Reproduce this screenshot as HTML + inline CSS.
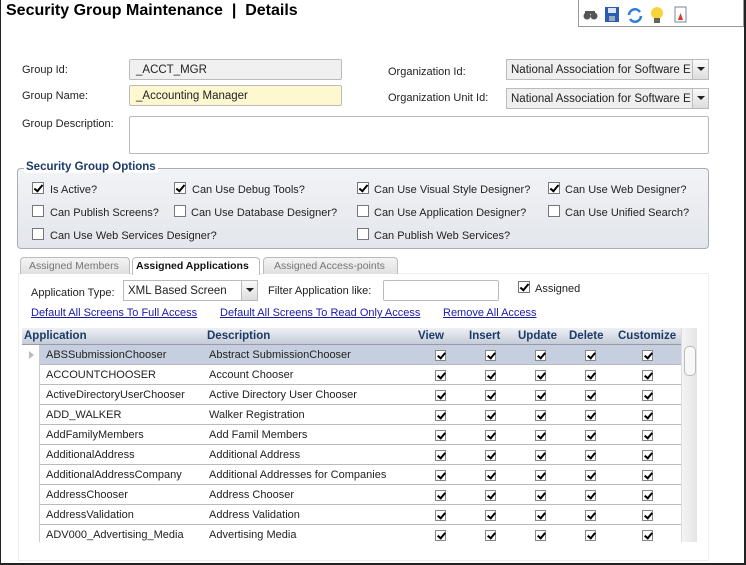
<!DOCTYPE html>
<html><head><meta charset="utf-8"><style>
*{box-sizing:border-box;margin:0;padding:0}
body{width:746px;height:565px;overflow:hidden;background:#fff;font-family:"Liberation Sans",Arial,sans-serif;font-size:11px;color:#222;position:relative}
.a{position:absolute;white-space:nowrap}
.frame{position:absolute;left:0;top:0;width:746px;height:565px;border-left:1px solid #222;border-right:2px solid #222;border-bottom:2px solid #222}
.title{left:6px;top:2px;font-size:16px;font-weight:bold;color:#000}
.tb{left:578px;top:-1px;width:166px;height:28px;border:1px solid #999;background:#fff}
.inp{position:absolute;border:1px solid #bbb;border-radius:2px;background:#f0f0f0;padding:4px 6px 0;font-size:11.5px;color:#222;white-space:nowrap}
.sel{position:absolute;border:1px solid #bbb;background:#efefef;padding:4px 4px 0;font-size:11.5px;overflow:hidden;white-space:nowrap}
.sel .dd{position:absolute;right:0;top:0;width:16px;height:100%;background:linear-gradient(#fafafa,#ddd);border-left:1px solid #bbb}
.sel .dd:after{content:"";position:absolute;left:4px;top:7px;border:4px solid transparent;border-top:4px solid #222}
.fs{left:17px;top:168px;width:692px;height:81px;border:1px solid #aab;border-radius:4px;background:linear-gradient(#f2f3f6,#e3e6ec)}
.leg{left:24px;top:161px;font-weight:bold;color:#1d3a68;background:#fff;padding:0 2px;font-size:11.5px}
.cb{position:absolute;width:12px;height:12px;border:1px solid #777;background:#fff}
.cb.c:after{content:"";position:absolute;left:3px;top:0px;width:3px;height:7px;border:solid #000;border-width:0 2px 2px 0;transform:rotate(40deg)}
.tab{position:absolute;top:257px;height:17px;border:1px solid #bbb;border-bottom:none;border-radius:4px 4px 0 0;background:linear-gradient(#f4f4f4,#e0e0e0);color:#777;padding:2px 0 0 6px;font-size:10.5px;white-space:nowrap;overflow:hidden}
.panel{left:18px;top:273px;width:691px;height:288px;border:1px solid #eee;background:#fff}
.lnk{color:#1a1aaa;text-decoration:underline}
.gh{left:22px;top:328px;width:659px;height:17px;background:linear-gradient(#eef0f4,#c4ccd8);border-bottom:1px solid #99a}
.gh span{position:absolute;top:2px;font-weight:bold;color:#1d3a68;font-size:11.5px}
.row{position:absolute;left:40px;width:641px;height:20px;border-bottom:1px solid #bbb}
.row span{position:absolute;top:4px}
.g{position:absolute;width:11px;height:11px;border:1px solid #888;background:#fff}
.g:after{content:"";position:absolute;left:3px;top:0;width:3px;height:6px;border:solid #000;border-width:0 2px 2px 0;transform:rotate(40deg)}
</style></head><body>
<div class="frame"></div>
<div class="a title">Security Group Maintenance&nbsp; |&nbsp; Details</div>
<div class="a tb"></div>
<svg class="a" style="left:582px;top:6px" width="110" height="18">
<g fill="#555"><circle cx="5" cy="10" r="3.5"/><circle cx="12" cy="10" r="3.5"/><rect x="3" y="5" width="10" height="3"/></g>
<g transform="translate(23,1)"><rect width="14" height="15" fill="#2a5db0"/><rect x="3" y="1" width="8" height="5" fill="#dde6f5"/><rect x="4" y="9" width="6" height="5" fill="#9ab"/></g>
<g transform="translate(45,1)" fill="none" stroke="#2d7fd8" stroke-width="2.5"><path d="M2 8 A6 6 0 0 1 13 5"/><path d="M14 9 A6 6 0 0 1 3 12"/></g>
<g transform="translate(68,0)"><circle cx="7" cy="7" r="6" fill="#f7d53a"/><rect x="4" y="12" width="6" height="5" fill="#665"/></g>
<g transform="translate(93,1)"><rect width="11" height="15" fill="#fff" stroke="#789"/><path d="M3 13 L5.5 6 L8 13 Z" fill="#d32"/></g>
</svg>

<div class="a" style="left:22px;top:64px">Group Id:</div>
<div class="inp" style="left:129px;top:59px;width:213px;height:21px">_ACCT_MGR</div>
<div class="a" style="left:22px;top:90px">Group Name:</div>
<div class="inp" style="left:129px;top:85px;width:213px;height:21px;background:#fdf8cf">_Accounting Manager</div>
<div class="a" style="left:22px;top:118px">Group Description:</div>
<div class="inp" style="left:129px;top:116px;width:580px;height:38px;background:#fff"></div>
<div class="a" style="left:388px;top:66px">Organization Id:</div>
<div class="sel" style="left:506px;top:59px;width:203px;height:21px">National Association for Software E<div class="dd"></div></div>
<div class="a" style="left:388px;top:92px">Organization Unit Id:</div>
<div class="sel" style="left:506px;top:88px;width:203px;height:21px">National Association for Software E<div class="dd"></div></div>

<div class="a fs"></div>
<div class="a leg">Security Group Options</div>
<div class="cb c" style="left:32px;top:182px"></div><div class="a" style="left:50px;top:184px">Is Active?</div>
<div class="cb c" style="left:174px;top:182px"></div><div class="a" style="left:192px;top:184px">Can Use Debug Tools?</div>
<div class="cb c" style="left:357px;top:182px"></div><div class="a" style="left:374px;top:184px">Can Use Visual Style Designer?</div>
<div class="cb c" style="left:548px;top:182px"></div><div class="a" style="left:565px;top:184px">Can Use Web Designer?</div>
<div class="cb" style="left:32px;top:205px"></div><div class="a" style="left:50px;top:207px">Can Publish Screens?</div>
<div class="cb" style="left:174px;top:205px"></div><div class="a" style="left:191px;top:207px">Can Use Database Designer?</div>
<div class="cb" style="left:357px;top:205px"></div><div class="a" style="left:374px;top:207px">Can Use Application Designer?</div>
<div class="cb" style="left:548px;top:205px"></div><div class="a" style="left:565px;top:207px">Can Use Unified Search?</div>
<div class="cb" style="left:32px;top:228px"></div><div class="a" style="left:50px;top:230px">Can Use Web Services Designer?</div>
<div class="cb" style="left:357px;top:228px"></div><div class="a" style="left:374px;top:230px">Can Publish Web Services?</div>

<div class="a panel"></div>
<div class="tab" style="left:20px;width:110px;padding-left:8px">Assigned Members</div>
<div class="tab" style="left:132px;width:128px;background:#fff;color:#111;font-weight:bold;padding-left:3px;height:18px">Assigned Applications</div>
<div class="tab" style="left:263px;width:135px;padding-left:10px">Assigned Access-points</div>

<div class="a" style="left:31px;top:287px">Application Type:</div>
<div class="sel" style="left:123px;top:280px;width:135px;height:21px;background:#fff">XML Based Screen<div class="dd"></div></div>
<div class="a" style="left:268px;top:285px">Filter Application like:</div>
<div class="inp" style="left:383px;top:280px;width:116px;height:21px;background:#fff"></div>
<div class="cb c" style="left:518px;top:281px"></div><div class="a" style="left:535px;top:283px">Assigned</div>
<div class="a lnk" style="left:31px;top:307px">Default All Screens To Full Access</div>
<div class="a lnk" style="left:220px;top:307px">Default All Screens To Read Only Access</div>
<div class="a lnk" style="left:443px;top:307px">Remove All Access</div>

<div class="a gh"><span style="left:2px">Application</span><span style="left:185px">Description</span><span style="left:396px">View</span><span style="left:447px">Insert</span><span style="left:496px">Update</span><span style="left:547px">Delete</span><span style="left:596px">Customize</span></div>
<div class="a" style="left:681px;top:328px;width:16px;height:214px;background:linear-gradient(90deg,#f4f4f4,#e4e4e4);border-left:1px solid #ddd"></div>
<div class="a" style="left:684px;top:346px;width:12px;height:30px;border:1px solid #bbb;border-radius:5px;background:#f8f8f8"></div>
<div class="a" style="left:22px;top:345px;width:18px;height:197px;background:#fff;border-right:1px solid #ccc"></div>
<div class="a" style="left:29px;top:351px;border:4px solid transparent;border-left:5px solid #bbb"></div>

<div class="row" style="top:345px;background:#c5cfdf"><span style="left:6px">ABSSubmissionChooser</span><span style="left:169px">Abstract SubmissionChooser</span></div>
<div class="row" style="top:365px"><span style="left:6px">ACCOUNTCHOOSER</span><span style="left:169px">Account Chooser</span></div>
<div class="row" style="top:385px"><span style="left:6px">ActiveDirectoryUserChooser</span><span style="left:169px">Active Directory User Chooser</span></div>
<div class="row" style="top:405px"><span style="left:6px">ADD_WALKER</span><span style="left:169px">Walker Registration</span></div>
<div class="row" style="top:425px"><span style="left:6px">AddFamilyMembers</span><span style="left:169px">Add Famil Members</span></div>
<div class="row" style="top:445px"><span style="left:6px">AdditionalAddress</span><span style="left:169px">Additional Address</span></div>
<div class="row" style="top:465px"><span style="left:6px">AdditionalAddressCompany</span><span style="left:169px">Additional Addresses for Companies</span></div>
<div class="row" style="top:485px"><span style="left:6px">AddressChooser</span><span style="left:169px">Address Chooser</span></div>
<div class="row" style="top:505px"><span style="left:6px">AddressValidation</span><span style="left:169px">Address Validation</span></div>
<div class="row" style="top:525px;height:17px;border-bottom:none"><span style="left:6px">ADV000_Advertising_Media</span><span style="left:169px">Advertising Media</span></div>
<div id="cbs"></div>
<script>
var h='',xs=[435,485,535,585,642];
for(var r=0;r<10;r++){for(var i=0;i<5;i++){h+='<div class="g" style="left:'+xs[i]+'px;top:'+(350+r*20)+'px"></div>';}}
document.getElementById('cbs').innerHTML=h;
</script>
</body></html>
